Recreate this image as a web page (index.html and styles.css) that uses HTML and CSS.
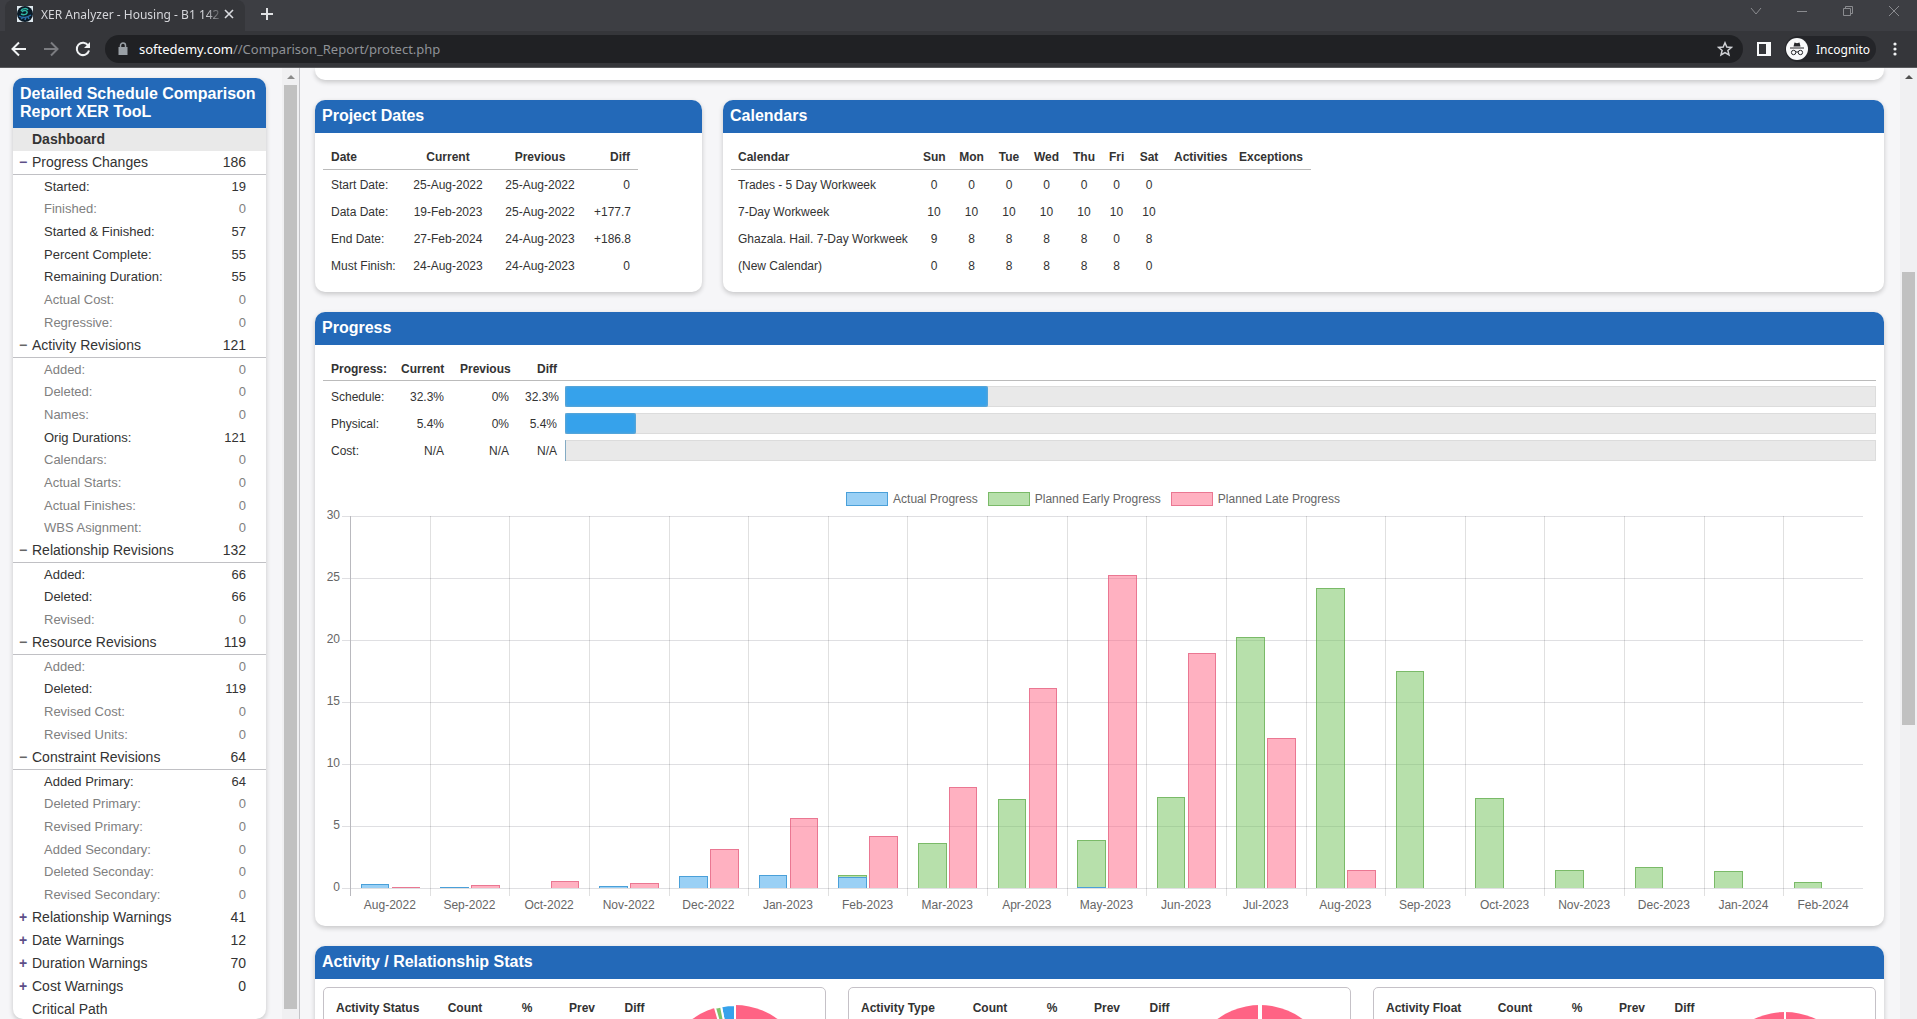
FILE: index.html
```html
<!DOCTYPE html>
<html lang="en">
<head>
    <meta charset="UTF-8">
    <meta name="viewport" content="width=device-width, initial-scale=1.0">
    <title>XER Analyzer - Housing - B1 142</title>
    <link rel="stylesheet" href="styles.css">
</head>
<body>
    <header class="browser">
        <div class="tab-strip">
            <div class="tab">
                <svg class="favicon" viewBox="0 0 16 16"><rect width="16" height="16" fill="#dfe9ee"/><circle cx="8" cy="8" r="8" fill="#0a1a26"/><path d="M4 5c1-3 6-3 7-1M5 6c2-3 6-1 5 1s-4 2-6 1" fill="none" stroke="#2fb5a5" stroke-width="1.5"/><path d="M2 10c3 2 8 2 12-1M4 13l3-2M8 14l1-3M12 13l-1-2" fill="none" stroke="#2b6ea8" stroke-width="1.5"/></svg>
                <span class="tab-title">XER Analyzer - Housing - B1 142</span>
                <button type="button" class="tab-close" aria-label="Close tab"><svg width="10" height="10" viewBox="0 0 10 10"><path d="M1 1l8 8M9 1l-8 8" stroke="#dadce0" stroke-width="1.6"/></svg></button>
            </div>
            <button type="button" class="new-tab" aria-label="New tab"><svg width="12" height="12" viewBox="0 0 12 12"><path d="M6 0v12M0 6h12" stroke="#e0e1e4" stroke-width="2"/></svg></button>
            <div class="window-controls">
                <button type="button" aria-label="Search tabs"><svg width="12" height="12" viewBox="0 0 12 12"><path d="M1 3l5 6 5-6" fill="none" stroke="#8a8b8f"/></svg></button>
                <button type="button" aria-label="Minimize"><svg width="12" height="12" viewBox="0 0 12 12"><path d="M1 6.500h10" stroke="#8a8b8f"/></svg></button>
                <button type="button" aria-label="Restore"><svg width="12" height="12" viewBox="0 0 12 12"><path d="M1.500 3.500h7v7h-7zM3.500 3V1.500h7v7H9" fill="none" stroke="#8a8b8f"/></svg></button>
                <button type="button" aria-label="Close"><svg width="12" height="12" viewBox="0 0 12 12"><path d="M1 1l10 10M11 1L1 11" stroke="#8a8b8f"/></svg></button>
            </div>
        </div>
        <div class="toolbar">
            <button type="button" class="tool" aria-label="Back"><svg width="16" height="16" viewBox="0 0 16 16"><path d="M15 8H2M8 1.500L1.500 8 8 14.500" fill="none" stroke="#f1f3f4" stroke-width="2"/></svg></button>
            <button type="button" class="tool" aria-label="Forward"><svg width="16" height="16" viewBox="0 0 16 16"><path d="M1 8h13M8 1.500L14.500 8 8 14.500" fill="none" stroke="#7b7c80" stroke-width="2"/></svg></button>
            <button type="button" class="tool" aria-label="Reload"><svg width="16" height="16" viewBox="0 0 16 16"><path d="M13.200 4.500A6.200 6.200 0 1 0 14 9.500" fill="none" stroke="#f1f3f4" stroke-width="2"/><path d="M15 1v6H9z" fill="#f1f3f4"/></svg></button>
            <div class="address">
                <svg width="10" height="14" viewBox="0 0 10 14"><path d="M0.500 5h9v8h-9z" fill="#9aa0a6"/><path d="M2.500 5V3.500a2.500 2.500 0 0 1 5 0V5" fill="none" stroke="#9aa0a6" stroke-width="1.500"/></svg>
                <div class="url" role="textbox" aria-label="Address"><span class="host">softedemy.com</span>//Comparison_Report/protect.php</div>
                <button type="button" class="star" aria-label="Bookmark"><svg width="16" height="16" viewBox="0 0 16 16"><path d="M8 1.800l1.800 4.200 4.600.4-3.500 3 1.100 4.500L8 11.500l-4 2.400 1.100-4.500-3.500-3 4.600-.4z" fill="none" stroke="#d0d2d6" stroke-width="1.500"/></svg></button>
            </div>
            <button type="button" class="side-panel" aria-label="Side panel"><svg width="14" height="14" viewBox="0 0 14 14"><path d="M0 0h14v14H0zM2 2v10h7V2z" fill="#f8f9fa" fill-rule="evenodd"/></svg></button>
            <button type="button" class="incognito">
                <svg width="22" height="22" viewBox="0 0 22 22"><circle cx="11" cy="11" r="11" fill="#f8f9fa"/><path d="M7.500 8.500l1-4 2.500.7 2.500-.7 1 4zM4 9.500h14v1H4z" fill="#26272b"/><circle cx="7.600" cy="14.500" r="2.200" fill="none" stroke="#26272b"/><circle cx="14.400" cy="14.500" r="2.200" fill="none" stroke="#26272b"/><path d="M9.800 14.200q1.200-.8 2.400 0" fill="none" stroke="#26272b"/></svg>
                Incognito
            </button>
            <button type="button" class="menu" aria-label="Menu"><svg width="4" height="14" viewBox="0 0 4 14"><circle cx="2" cy="2" r="1.600" fill="#f1f3f4"/><circle cx="2" cy="7" r="1.600" fill="#f1f3f4"/><circle cx="2" cy="12" r="1.600" fill="#f1f3f4"/></svg></button>
        </div>
    </header>

    <div class="frames">
        <div class="sidebar">
            <nav class="card nav-card">
                <h1 class="card-title">Detailed Schedule Comparison Report XER TooL</h1>
                <a href="#" class="nav-row active">Dashboard</a>

                <div class="nav-row open"><a href="#" class="toggle visited">−</a><a href="#">Progress Changes</a><span class="count">186</span></div>
                <ul class="sub">
                    <li><a href="#">Started:</a><span>19</span></li>
                    <li class="zero"><a href="#">Finished:</a><span>0</span></li>
                    <li><a href="#">Started &amp; Finished:</a><span>57</span></li>
                    <li><a href="#">Percent Complete:</a><span>55</span></li>
                    <li><a href="#">Remaining Duration:</a><span>55</span></li>
                    <li class="zero"><a href="#">Actual Cost:</a><span>0</span></li>
                    <li class="zero"><a href="#">Regressive:</a><span>0</span></li>
                </ul>

                <div class="nav-row open"><a href="#" class="toggle">−</a><a href="#">Activity Revisions</a><span class="count">121</span></div>
                <ul class="sub">
                    <li class="zero"><a href="#">Added:</a><span>0</span></li>
                    <li class="zero"><a href="#">Deleted:</a><span>0</span></li>
                    <li class="zero"><a href="#">Names:</a><span>0</span></li>
                    <li><a href="#">Orig Durations:</a><span>121</span></li>
                    <li class="zero"><a href="#">Calendars:</a><span>0</span></li>
                    <li class="zero"><a href="#">Actual Starts:</a><span>0</span></li>
                    <li class="zero"><a href="#">Actual Finishes:</a><span>0</span></li>
                    <li class="zero"><a href="#">WBS Asignment:</a><span>0</span></li>
                </ul>

                <div class="nav-row open"><a href="#" class="toggle">−</a><a href="#">Relationship Revisions</a><span class="count">132</span></div>
                <ul class="sub">
                    <li><a href="#">Added:</a><span>66</span></li>
                    <li><a href="#">Deleted:</a><span>66</span></li>
                    <li class="zero"><a href="#">Revised:</a><span>0</span></li>
                </ul>

                <div class="nav-row open"><a href="#" class="toggle">−</a><a href="#">Resource Revisions</a><span class="count">119</span></div>
                <ul class="sub">
                    <li class="zero"><a href="#">Added:</a><span>0</span></li>
                    <li><a href="#">Deleted:</a><span>119</span></li>
                    <li class="zero"><a href="#">Revised Cost:</a><span>0</span></li>
                    <li class="zero"><a href="#">Revised Units:</a><span>0</span></li>
                </ul>

                <div class="nav-row open"><a href="#" class="toggle">−</a><a href="#">Constraint Revisions</a><span class="count">64</span></div>
                <ul class="sub">
                    <li><a href="#">Added Primary:</a><span>64</span></li>
                    <li class="zero"><a href="#">Deleted Primary:</a><span>0</span></li>
                    <li class="zero"><a href="#">Revised Primary:</a><span>0</span></li>
                    <li class="zero"><a href="#">Added Secondary:</a><span>0</span></li>
                    <li class="zero"><a href="#">Deleted Seconday:</a><span>0</span></li>
                    <li class="zero"><a href="#">Revised Secondary:</a><span>0</span></li>
                </ul>

                <div class="nav-row"><a href="#" class="toggle visited">+</a><a href="#">Relationship Warnings</a><span class="count">41</span></div>
                <div class="nav-row"><a href="#" class="toggle visited">+</a><a href="#">Date Warnings</a><span class="count">12</span></div>
                <div class="nav-row"><a href="#" class="toggle visited">+</a><a href="#">Duration Warnings</a><span class="count">70</span></div>
                <div class="nav-row"><a href="#" class="toggle visited">+</a><a href="#">Cost Warnings</a><span class="count">0</span></div>
                <div class="nav-row"><span class="toggle"></span><a href="#">Critical Path</a></div>
            </nav>
            <div class="scrollbar side-scroll">
                <svg width="8" height="4" viewBox="0 0 8 4"><path d="M0 4l4-4 4 4z" fill="#8b8b8b"/></svg>
                <div class="thumb"></div>
            </div>
        </div>

        <main class="content">
            <section class="card previous-card"></section>

            <div class="row">
                <section class="card dates-card">
                    <h2 class="card-title">Project Dates</h2>
                    <table class="data dates">
                        <colgroup><col class="name"><col class="date"><col class="date"><col class="diff"></colgroup>
                        <thead>
                            <tr><th>Date</th><th>Current</th><th>Previous</th><th>Diff</th></tr>
                        </thead>
                        <tbody>
                            <tr><td>Start Date:</td><td>25-Aug-2022</td><td>25-Aug-2022</td><td>0</td></tr>
                            <tr><td>Data Date:</td><td>19-Feb-2023</td><td>25-Aug-2022</td><td>+177.7</td></tr>
                            <tr><td>End Date:</td><td>27-Feb-2024</td><td>24-Aug-2023</td><td>+186.8</td></tr>
                            <tr><td>Must Finish:</td><td>24-Aug-2023</td><td>24-Aug-2023</td><td>0</td></tr>
                        </tbody>
                    </table>
                </section>

                <section class="card calendars-card">
                    <h2 class="card-title">Calendars</h2>
                    <table class="data calendars">
                        <colgroup><col class="name"><col class="day"><col class="day-wide"><col class="day"><col class="day-wide"><col class="day"><col class="day-narrow"><col class="day"><col class="activities"><col class="exceptions"></colgroup>
                        <thead>
                            <tr><th>Calendar</th><th>Sun</th><th>Mon</th><th>Tue</th><th>Wed</th><th>Thu</th><th>Fri</th><th>Sat</th><th>Activities</th><th>Exceptions</th></tr>
                        </thead>
                        <tbody>
                            <tr><td>Trades - 5 Day Workweek</td><td>0</td><td>0</td><td>0</td><td>0</td><td>0</td><td>0</td><td>0</td><td></td><td></td></tr>
                            <tr><td>7-Day Workweek</td><td>10</td><td>10</td><td>10</td><td>10</td><td>10</td><td>10</td><td>10</td><td></td><td></td></tr>
                            <tr><td>Ghazala. Hail. 7-Day Workweek</td><td>9</td><td>8</td><td>8</td><td>8</td><td>8</td><td>0</td><td>8</td><td></td><td></td></tr>
                            <tr><td>(New Calendar)</td><td>0</td><td>8</td><td>8</td><td>8</td><td>8</td><td>8</td><td>0</td><td></td><td></td></tr>
                        </tbody>
                    </table>
                </section>
            </div>

            <section class="card progress-card">
                <h2 class="card-title">Progress</h2>
                <table class="data progress">
                    <colgroup><col class="name"><col class="current"><col class="prev"><col class="diff"><col></colgroup>
                    <thead>
                        <tr><th>Progress:</th><th>Current</th><th>Previous</th><th>Diff</th><th></th></tr>
                    </thead>
                    <tbody>
                        <tr><td>Schedule:</td><td>32.3%</td><td>0%</td><td>32.3%</td><td class="bar-cell"><div class="track"><div class="fill" style="width: 32.3%"></div></div></td></tr>
                        <tr><td>Physical:</td><td>5.4%</td><td>0%</td><td>5.4%</td><td class="bar-cell"><div class="track"><div class="fill" style="width: 5.4%"></div></div></td></tr>
                        <tr><td>Cost:</td><td>N/A</td><td>N/A</td><td>N/A</td><td class="bar-cell"><div class="track"><div class="fill empty"></div></div></td></tr>
                    </tbody>
                </table>

                <div class="legend">
                    <span class="key"><i class="swatch actual"></i>Actual Progress</span>
                    <span class="key"><i class="swatch early"></i>Planned Early Progress</span>
                    <span class="key"><i class="swatch late"></i>Planned Late Progress</span>
                </div>
                <div class="chart">
                    <div class="y-axis"><span>30</span><span>25</span><span>20</span><span>15</span><span>10</span><span>5</span><span>0</span></div>
                    <div class="plot" id="plot"></div>
                </div>
            </section>

            <section class="card stats-card">
                <h2 class="card-title">Activity / Relationship Stats</h2>
                <div class="stats">
                    <div class="stat">
                        <table class="stat-table">
                            <tr><th>Activity Status</th><th>Count</th><th>%</th><th>Prev</th><th>Diff</th></tr>
                        </table>
                        <svg class="pie" viewBox="0 0 144 144">
                            <circle cx="72" cy="72" r="72" fill="#ff6384"/>
                            <path d="M72 72V0A72 72 0 0 0 58 1.400z" fill="#36a2eb" stroke="#fff" stroke-width="2"/>
                            <path d="M72 72L58 1.400A72 72 0 0 0 52 2.800z" fill="#7cc36a" stroke="#fff" stroke-width="2"/>
                        </svg>
                    </div>
                    <div class="stat">
                        <table class="stat-table">
                            <tr><th>Activity Type</th><th>Count</th><th>%</th><th>Prev</th><th>Diff</th></tr>
                        </table>
                        <svg class="pie" viewBox="0 0 144 144">
                            <circle cx="72" cy="72" r="72" fill="#ff6384"/>
                            <path d="M72 72V0" stroke="#fff" stroke-width="4"/>
                        </svg>
                    </div>
                    <div class="stat">
                        <table class="stat-table">
                            <tr><th>Activity Float</th><th>Count</th><th>%</th><th>Prev</th><th>Diff</th></tr>
                        </table>
                        <svg class="pie low" viewBox="0 0 144 144">
                            <circle cx="72" cy="72" r="72" fill="#ff6384"/>
                            <path d="M72 72V0" stroke="#fff" stroke-width="2"/>
                        </svg>
                    </div>
                </div>
            </section>
        </main>

        <div class="scrollbar page-scroll">
            <svg width="8" height="4" viewBox="0 0 8 4"><path d="M0 4l4-4 4 4z" fill="#505050"/></svg>
            <div class="thumb"></div>
        </div>
    </div>
    <script src="script.js"></script>
</body>
</html>
```
FILE: styles.css
```css
* {
    box-sizing: border-box;
}
body {
    margin: 0;
    height: 100vh;
    display: flex;
    flex-direction: column;
    overflow: hidden;
    font-family: "Liberation Sans", Arial, sans-serif;
    font-size: 12px;
    color: #333;
    background-color: #f6f6f8;
}
a {
    color: inherit;
    text-decoration: none;
}
button {
    display: flex;
    align-items: center;
    justify-content: center;
    padding: 0;
    border: 0;
    background: none;
    font-family: inherit;
}
svg {
    flex: none;
}

/* browser window */
.browser {
    flex: none;
    font-family: "Noto Sans", "Open Sans", sans-serif;
    background-color: #3d3e43;
    border-bottom: 1px solid #5a5b5e;
}
.tab-strip {
    display: flex;
    height: 31px;
    padding-left: 5px;
}
.tab {
    display: flex;
    align-items: center;
    width: 240px;
    padding: 0 11px 3px 12px;
    background-color: #35363a;
    border-radius: 8px 8px 0 0;
}
.favicon {
    width: 16px;
    height: 16px;
}
.tab-title {
    flex: 1;
    margin-left: 8px;
    white-space: nowrap;
    font-size: 12px;
    color: #d5d6da;
    mask-image: linear-gradient(to right, #000 90%, transparent);
}
.new-tab {
    width: 44px;
    height: 28px;
}
.window-controls {
    display: flex;
    margin-left: auto;
}
.window-controls button {
    width: 46px;
    height: 22px;
}
.toolbar {
    display: flex;
    align-items: center;
    height: 36px;
    padding: 0 3px;
    background-color: #35363a;
}
.tool {
    width: 32px;
    height: 28px;
}
.address {
    flex: 1;
    display: flex;
    align-items: center;
    height: 28px;
    margin-left: 6px;
    padding: 0 10px 0 13px;
    border-radius: 14px;
    background-color: #202124;
}
.url {
    flex: 1;
    margin-left: 11px;
    font-size: 13px;
    color: #8f9297;
}
.host {
    color: #fff;
}
.side-panel {
    width: 42px;
    height: 28px;
}
.incognito {
    justify-content: flex-start;
    gap: 8px;
    width: 91px;
    height: 26px;
    padding-left: 1px;
    border-radius: 13px;
    background-color: #242529;
    color: #fff;
    font-size: 12px;
}
.menu {
    width: 38px;
    height: 28px;
}

/* page frames */
.frames {
    flex: 1;
    display: flex;
    min-height: 0;
}
.sidebar {
    flex: none;
    display: flex;
    justify-content: space-between;
    width: 300px;
    padding-left: 13px;
    border-right: 1px solid #c4c4c8;
    overflow: hidden;
}
.content {
    flex: 1;
    display: flex;
    flex-direction: column;
    gap: 20px;
    min-width: 0;
    padding: 0 16px 0 15px;
    overflow: hidden;
}
.scrollbar {
    display: flex;
    flex-direction: column;
    align-items: center;
    width: 17px;
    padding-top: 7px;
    background-color: #f0f0f2;
}
.thumb {
    width: 13px;
    background-color: #c1c1c1;
}
.side-scroll .thumb {
    flex: 1;
    margin: 6px 0 10px;
}
.page-scroll .thumb {
    height: 48%;
    margin-top: 193px;
}

/* cards */
.card {
    flex: none;
    background-color: #fff;
    border-radius: 10px;
    box-shadow: 0 2px 5px rgba(0, 0, 0, 0.2);
}
.card-title {
    margin: 0;
    padding: 7px 7px 8px;
    border-radius: 10px 10px 0 0;
    background-color: #2369b8;
    color: #fff;
    font-size: 16px;
    line-height: 18px;
}
.previous-card {
    height: 12px;
    border-radius: 0 0 10px 10px;
}
.row {
    flex: none;
    display: flex;
    gap: 21px;
}
.dates-card {
    width: 387px;
}
.calendars-card {
    flex: 1;
}
.row .card {
    padding-bottom: 12px;
}

/* navigation */
.nav-card {
    width: 253px;
    margin-top: 10px;
}
.nav-card .card-title {
    padding-bottom: 7px;
}
.nav-row {
    display: flex;
    padding: 0 20px 0 6px;
    font-size: 14px;
    line-height: 23px;
}
.nav-row.open {
    border-bottom: 1px solid #c0c0c4;
}
.nav-row.active {
    padding-left: 19px;
    font-weight: bold;
    background-color: #e9e9e9;
}
.toggle {
    width: 13px;
    color: #666;
    font-weight: bold;
}
.toggle.visited {
    color: #5d4f88;
}
.count {
    margin-left: auto;
}
.sub {
    margin: 0;
    padding: 0;
    list-style: none;
    font-size: 13px;
}
.sub li {
    display: flex;
    justify-content: space-between;
    padding: 0 20px 0 31px;
    line-height: 23px;
}
.sub li:nth-child(3n+2) {
    line-height: 22px;
}
.sub .zero {
    color: #808080;
}

/* tables */
.data {
    margin: 11px 8px 0;
    border-collapse: collapse;
    table-layout: fixed;
}
.data th {
    height: 25px;
    padding: 2px 8px 0;
    border-bottom: 1px solid #bbb;
    text-align: center;
}
.data td {
    height: 27px;
    padding: 0 8px;
    text-align: center;
}
.data tbody::before {
    content: "";
    display: block;
    height: 2px;
}
.data th:first-child,
.data td:first-child {
    text-align: left;
    white-space: nowrap;
}
.dates {
    width: 315px;
}
.dates .name {
    width: 79px;
}
.dates .date {
    width: 92px;
}
.dates th:last-child,
.dates td:last-child {
    text-align: right;
}
.calendars {
    width: 580px;
}
.calendars th {
    padding: 2px 7px 0;
}
.calendars td {
    padding: 0 7px;
}
.calendars .name {
    width: 185px;
}
.calendars .day {
    width: 36px;
}
.calendars .day-wide {
    width: 39px;
}
.calendars .day-narrow {
    width: 29px;
}
.calendars .activities {
    width: 64px;
}
.progress-card {
    padding-bottom: 12px;
}
.progress {
    width: calc(100% - 16px);
}
.progress .name {
    width: 70px;
}
.progress .current {
    width: 59px;
}
.progress .prev {
    width: 65px;
}
.progress .diff {
    width: 48px;
}
.progress th,
.progress td {
    text-align: right;
}
.progress th {
    white-space: nowrap;
}
.progress .bar-cell {
    padding: 0;
}
.track {
    height: 21px;
    background-color: #e9e9e9;
    border: 1px solid #dcdcdc;
    border-left: 0;
}
.fill {
    height: 21px;
    margin-top: -1px;
    border-radius: 2px;
    background-color: #36a2eb;
    box-shadow: inset 0 0 3px #86a9bf;
}
.fill.empty {
    width: 1px;
    background-color: #7fb0d0;
}

/* progress chart */
.legend {
    display: flex;
    justify-content: center;
    gap: 10px;
    margin-top: 27px;
    padding-right: 13px;
    color: #666;
    line-height: 16px;
}
.key {
    display: flex;
    align-items: center;
    gap: 5px;
}
.swatch {
    width: 42px;
    height: 14px;
    border: 1px solid;
}
.actual {
    background-color: rgba(54, 162, 235, 0.5);
    border-color: rgba(40, 140, 205, 0.7);
}
.early {
    background-color: rgba(112, 193, 88, 0.5);
    border-color: rgba(95, 170, 75, 0.7);
}
.late {
    background-color: rgba(255, 99, 132, 0.5);
    border-color: rgba(220, 80, 115, 0.6);
}
.chart {
    display: flex;
    margin: 9px 21px 0 8px;
    color: #666;
}
.y-axis {
    display: flex;
    flex-direction: column;
    justify-content: space-between;
    width: 19px;
    height: 386px;
    margin-top: -8px;
    padding-right: 2px;
    line-height: 14px;
    text-align: right;
}
.plot {
    flex: 1;
    display: flex;
    padding-left: 8px;
    background: repeating-linear-gradient(to bottom, #dfdfe2 0 1px, transparent 1px 62px) no-repeat;
    background-size: 100% 373px;
}
.month {
    flex: 1;
    text-align: center;
}
.bars {
    display: flex;
    gap: 4%;
    height: 380px;
    padding: 0 12% 8px;
    border-left: 1px solid rgba(0, 0, 0, 0.12);
}
.month:first-child .bars {
    border-left-color: #b9b9be;
}
.stack {
    flex: 1;
    display: flex;
    flex-direction: column;
    justify-content: flex-end;
}
.bar {
    border: 1px solid;
    border-bottom: 0;
}
.bar.actual {
    border-color: rgba(40, 140, 205, 0.7);
}
.bar.early {
    border-color: rgba(95, 170, 75, 0.7);
}
.bar.late {
    border-color: rgba(220, 80, 115, 0.6);
}
.month-name {
    line-height: 18px;
}

/* stats */
.stats {
    display: flex;
    gap: 22px;
    padding: 8px;
}
.stat {
    flex: 1;
    display: flex;
    align-items: flex-start;
    padding: 10px 11px 10px 12px;
    border: 1px solid #c5c1c7;
    border-radius: 5px;
}
.stat-table {
    width: 327px;
    border-collapse: collapse;
    table-layout: fixed;
}
.stat-table th {
    height: 20px;
    padding: 0;
}
.stat-table th:first-child {
    width: 98px;
    text-align: left;
}
.stat-table th:nth-child(2),
.stat-table th:nth-child(3) {
    width: 62px;
}
.stat-table th:nth-child(4) {
    width: 48px;
}
.pie {
    width: 144px;
    height: 144px;
    margin-top: 7px;
}
.pie.low {
    margin-top: 14px;
}
```
FILE: script.js
```js
// [month, actual, planned early, planned late]
const months = [
    ['Aug-2022', 0.3, 0, 0.1],
    ['Sep-2022', 0.03, 0, 0.25],
    ['Oct-2022', 0, 0, 0.6],
    ['Nov-2022', 0.2, 0, 0.4],
    ['Dec-2022', 1, 0, 3.15],
    ['Jan-2023', 1.05, 0, 5.67],
    ['Feb-2023', 0.9, 0.15, 4.2],
    ['Mar-2023', 0, 3.67, 8.17],
    ['Apr-2023', 0, 7.15, 16.1],
    ['May-2023', 0.05, 3.83, 25.27],
    ['Jun-2023', 0, 7.3, 18.93],
    ['Jul-2023', 0, 20.25, 12.08],
    ['Aug-2023', 0, 24.2, 1.45],
    ['Sep-2023', 0, 17.47, 0],
    ['Oct-2023', 0, 7.22, 0],
    ['Nov-2023', 0, 1.42, 0],
    ['Dec-2023', 0, 1.72, 0],
    ['Jan-2024', 0, 1.4, 0],
    ['Feb-2024', 0, 0.48, 0]
];
const maxValue = 30;

function bar(name, value) {
    if (!value) {
        return '';
    }
    return `<div class="bar ${name}" style="height: ${value / maxValue * 100}%"></div>`;
}

document.getElementById('plot').innerHTML = months.map(([month, actual, early, late]) => `
    <div class="month">
        <div class="bars">
            <div class="stack">${bar('early', early)}${bar('actual', actual)}</div>
            <div class="stack">${bar('late', late)}</div>
        </div>
        <div class="month-name">${month}</div>
    </div>
`).join('');
```
